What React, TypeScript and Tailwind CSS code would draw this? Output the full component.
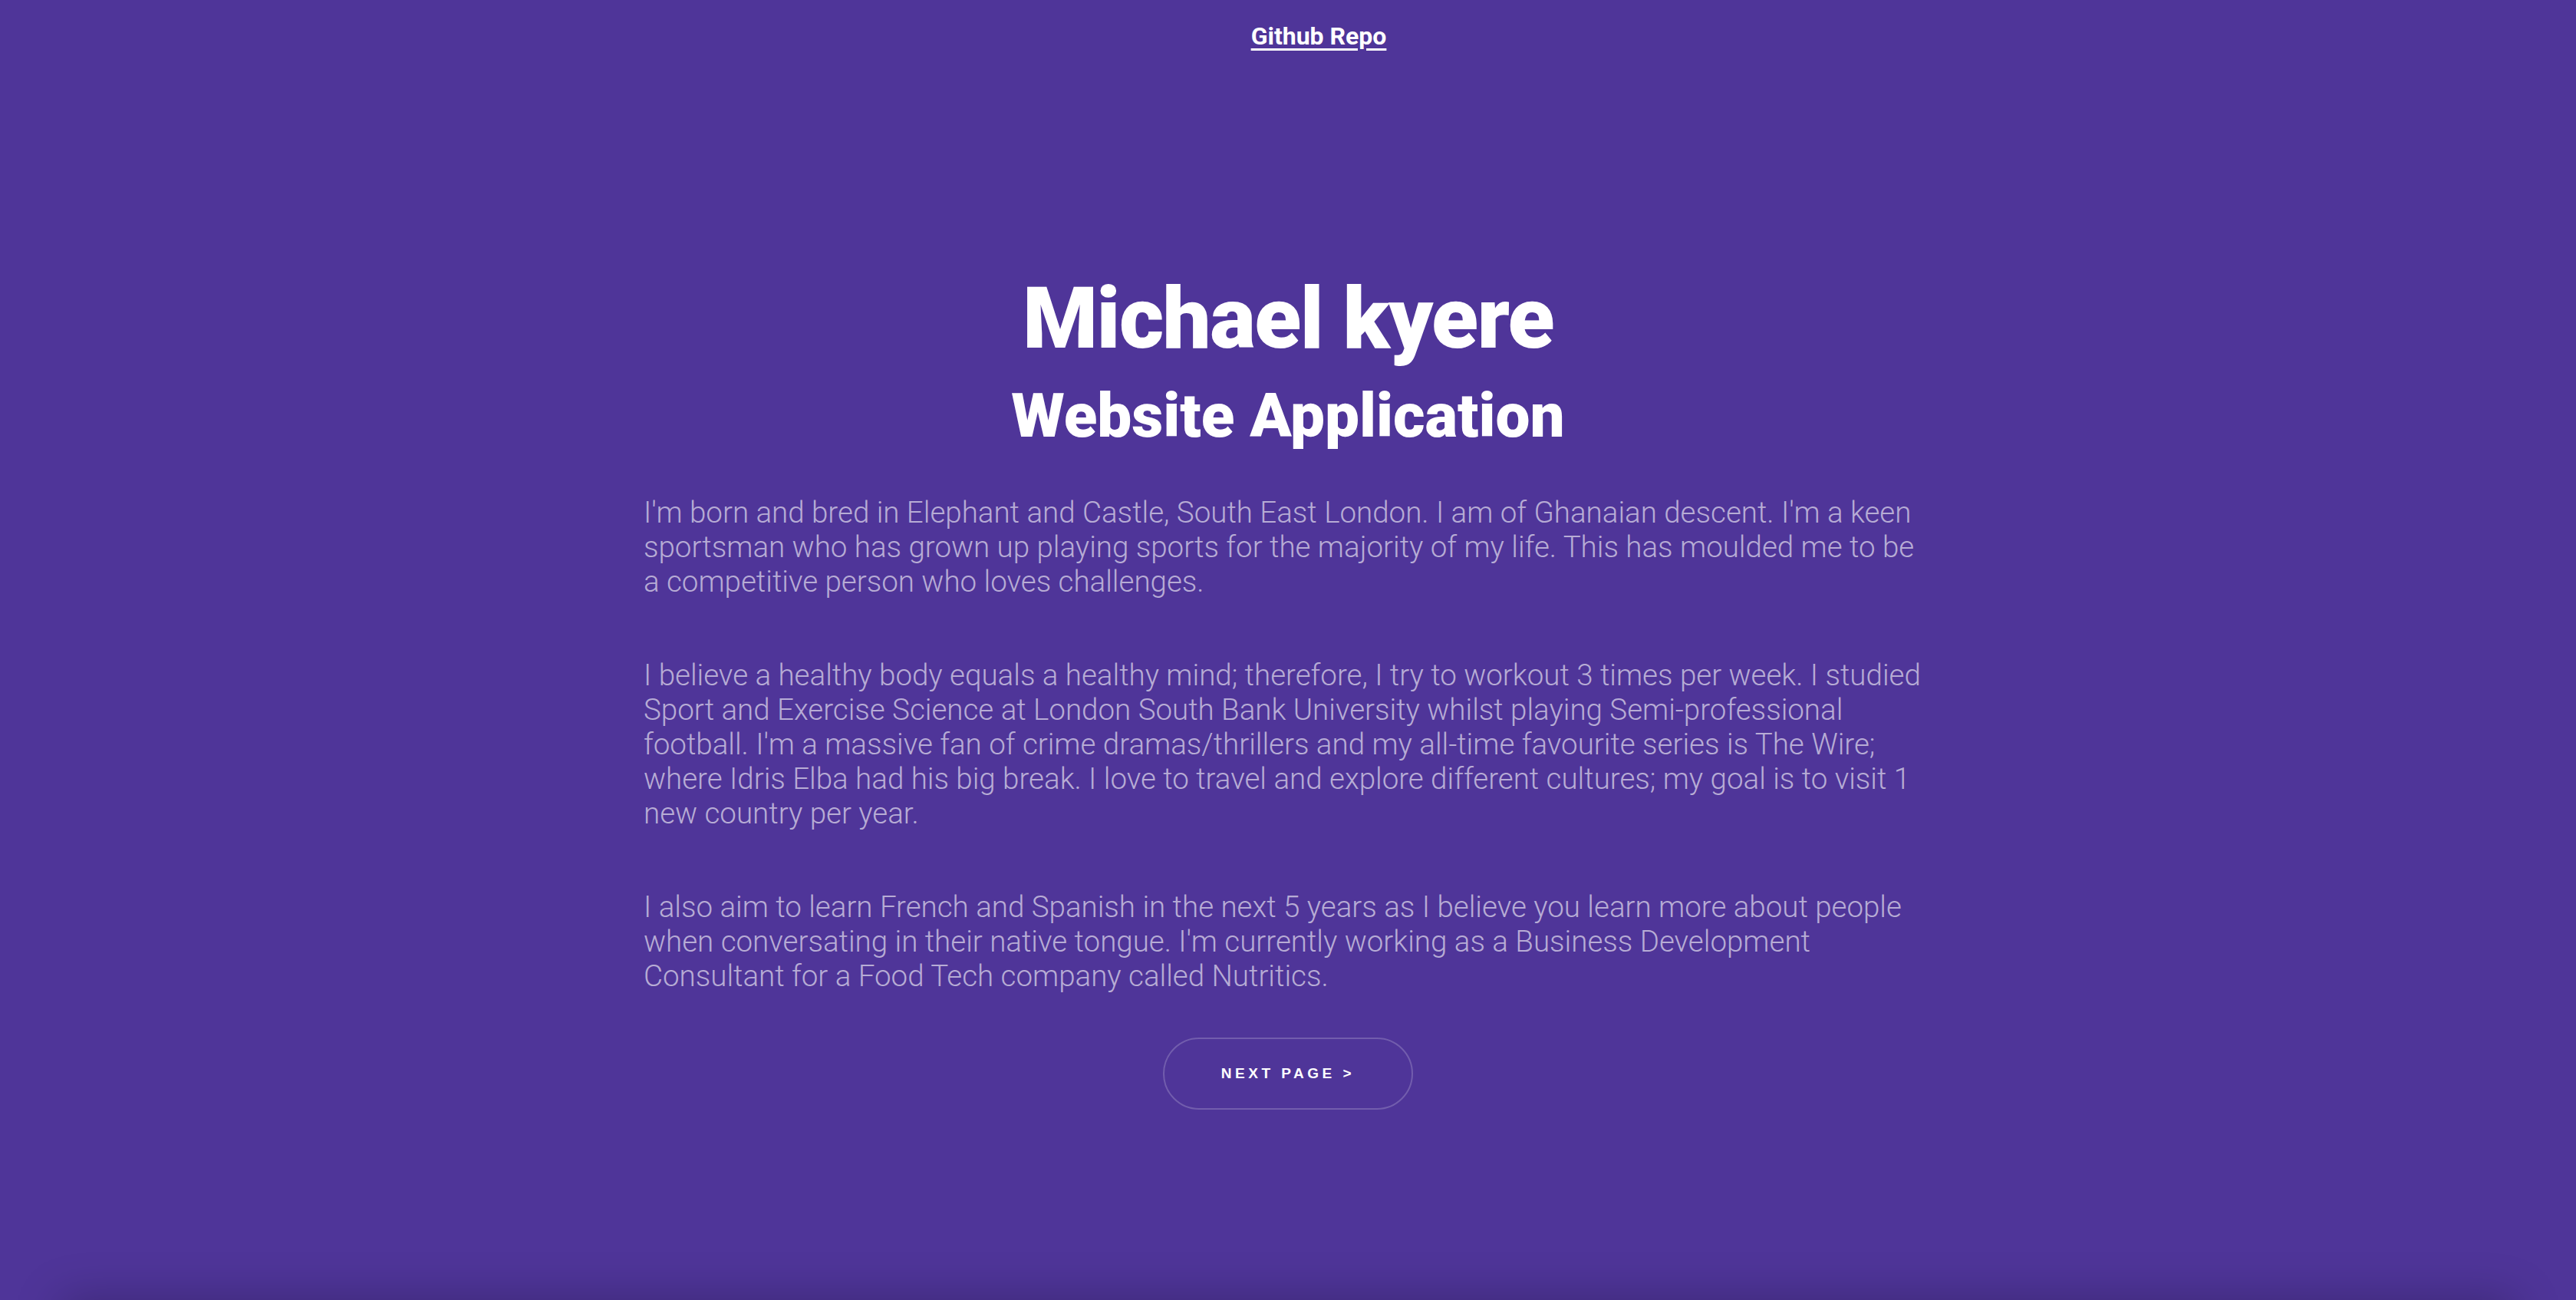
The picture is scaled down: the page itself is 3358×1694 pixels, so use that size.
import React from "react";

export default function App() {
  return (
    <div
      className="relative min-h-screen w-full overflow-hidden bg-[#4f3599] text-white"
      style={{ fontFamily: "Roboto, 'Noto Sans', sans-serif" }}
    >
      <div className="flex justify-center pl-[80px] pt-[23px]">
        <a href="#" className="text-[32px] font-bold leading-[48px] underline underline-offset-[5px] decoration-[3px] text-white">
          Github Repo
        </a>
      </div>

      <div className="mx-auto w-[1680px] pt-[277px]">
        <h1 className="text-center text-[112px] font-black leading-[134px] tracking-[-1.5px]">Michael kyere</h1>
        <h2 className="mt-[12px] text-center text-[80px] font-black leading-[96px]">Website Application</h2>

        <div className="mt-[55px] flex flex-col gap-[77px] text-[38.5px] font-light leading-[45px] text-white/60">
          <p>
            I'm born and bred in Elephant and Castle, South East London. I am of Ghanaian descent. I'm a keen sportsman who has grown up playing sports for the majority of my life. This has moulded me to be a competitive person who loves challenges.
          </p>
          <p>
            I believe a healthy body equals a healthy mind; therefore, I try to workout 3 times per week. I studied Sport and Exercise Science at London South Bank University whilst playing Semi-professional football. I'm a massive fan of crime dramas/thrillers and my all-time favourite series is The Wire; where Idris Elba had his big break. I love to travel and explore different cultures; my goal is to visit 1 new country per year.
          </p>
          <p>
            I also aim to learn French and Spanish in the next 5 years as I believe you learn more about people when conversating in their native tongue. I'm currently working as a Business Development Consultant for a Food Tech company called Nutritics.
          </p>
        </div>

        <div className="mt-[58px] flex justify-center">
          <button
            className="flex h-[94px] w-[326px] items-center justify-center rounded-full border-2 border-white/20 text-[19px] font-bold tracking-[4.5px] text-white"
            style={{ fontFamily: "'Liberation Sans', Arial, sans-serif" }}
          >
            NEXT PAGE &gt;
          </button>
        </div>
      </div>

      <div className="pointer-events-none absolute bottom-[-60px] left-[80px] right-[80px] h-[60px] shadow-[0_0_60px_rgba(0,0,0,0.25)]" />
    </div>
  );
}
